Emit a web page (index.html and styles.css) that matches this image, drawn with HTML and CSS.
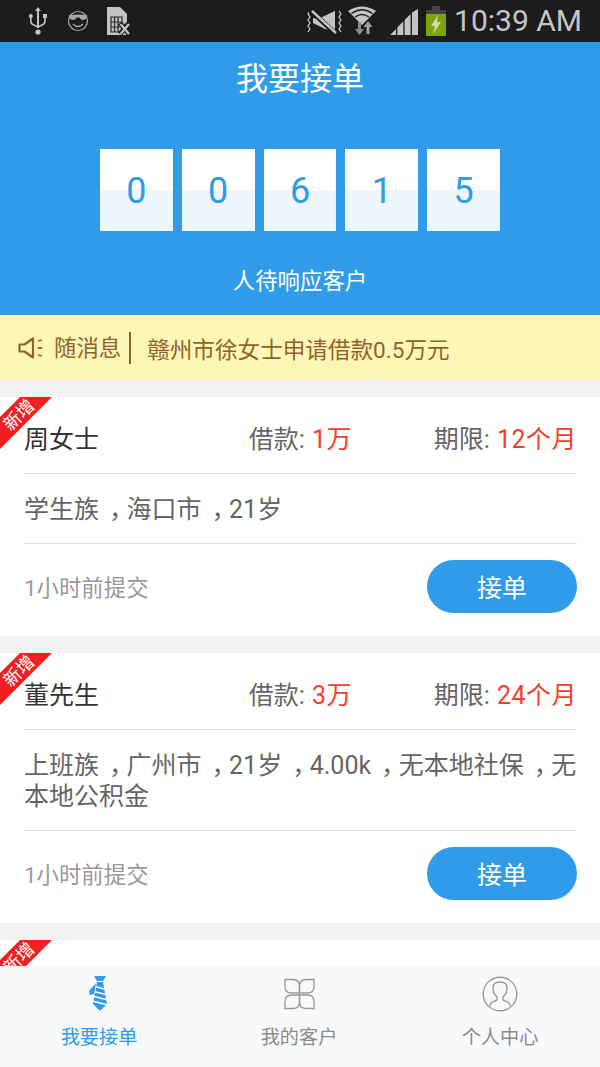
FILE: index.html
```html
<!DOCTYPE html>
<html lang="zh">
<head>
<meta charset="utf-8">
<title>我要接单</title>
<link rel="stylesheet" href="styles.css">
</head>
<body>
<div class="page">
  <div class="status">
    <div class="status-left">
      <svg width="20" height="30" viewBox="0 0 20 30"><g fill="#c4c4c4"><path d="M10 1l3 4h-2v17h-2V5H7z"/><circle cx="10" cy="26" r="2.6"/><circle cx="2.8" cy="10" r="2"/><rect x="15" y="8" width="4" height="4"/></g><path d="M2.8 11v4q0 3 3 4l4.2 2M17 12v3q0 3-3 4l-4 2" fill="none" stroke="#c4c4c4" stroke-width="1.6"/></svg>
      <svg class="ic-face" width="22" height="22" viewBox="0 0 22 22"><circle cx="11" cy="11" r="9.5" fill="none" stroke="#a8a8a8" stroke-width="1.2"/><path d="M1.500 5.500q9.500-2 19 0l-1 3q-3 2.500-6 .5l-1-1.500h-3l-1 1.500q-3 2-6-.5z" fill="#a8a8a8"/><path d="M6 14q5 5 10 0" fill="none" stroke="#a8a8a8" stroke-width="1.2"/></svg>
      <svg class="ic-sim" width="25" height="30" viewBox="0 0 25 30"><path d="M1 1h13l7 7v21H1z" fill="#c4c4c4"/><path d="M5 11h11v15H5zM8.500 11v15M12 11v15M5 16h11M5 21h11" fill="none" stroke="#2a2a2a" stroke-width="1.200"/><path d="M14 17l9 11M23 17l-9 11" stroke="#1c1c1c" stroke-width="5"/><path d="M14.500 18l8.500 10M23 18l-8.500 10" stroke="#c4c4c4" stroke-width="2.200"/></svg>
    </div>
    <div class="status-right">
      <svg class="ic-mute" width="35" height="24" viewBox="0 0 35 24"><g fill="none" stroke="#c4c4c4" stroke-width="1.300"><path d="M3 1L1 4l2 3-2 3 2 3-2 3 2 3-2 3M32 1l2 3-2 3 2 3-2 3 2 3-2 3 2 3"/></g><path d="M6 8l5 1 17-8v20l-10-2-12-6z" fill="#c4c4c4"/><path d="M3 0l26 24" stroke="#1c1c1c" stroke-width="5"/><path d="M5 1l24 22" stroke="#c4c4c4" stroke-width="2.400"/></svg>
      <svg class="ic-wifi" width="30" height="30" viewBox="0 0 30 30"><path d="M0 5Q14-4 28 5L14 19z" fill="#c4c4c4"/><path d="M3.500 7.500Q14 0 24.500 7.500" fill="none" stroke="#1c1c1c" stroke-width="1.300"/><path d="M7 11q7-5 14 0" fill="none" stroke="#1c1c1c" stroke-width="1.300"/><path d="M10 16h3v7h3l-4.500 6L7 23h3z" fill="#8a8a8a"/><path d="M20 15l4.500 6h-3v7h-3v-7h-3z" fill="#a0a0a0"/></svg>
      <svg class="ic-signal" width="28" height="26" viewBox="0 0 28 26"><path d="M0 26l6-6v6zM7.300 26v-7.500l6-6V26zM14.600 26V11l6-6v21zM22 26V3.500L28 0v26z" fill="#c4c4c4"/></svg>
      <svg class="ic-batt" width="20" height="30" viewBox="0 0 20 30"><path d="M6 0h8v4H6z" fill="#444"/><path d="M0 4h20v4H0z" fill="#444"/><path d="M0 8h20v22H0z" fill="#7aa60c"/><path d="M12 9L5 20h4l-2 8 8-12h-4z" fill="#d3e0a0"/></svg>
      <span class="clock">10:39 AM</span>
    </div>
  </div>

  <header class="hero">
    <h1 class="hero-title">我要接单</h1>
    <div class="tiles">
      <div class="tile">0</div>
      <div class="tile">0</div>
      <div class="tile">6</div>
      <div class="tile">1</div>
      <div class="tile">5</div>
    </div>
    <p class="hero-sub">人待响应客户</p>
  </header>

  <div class="notice">
    <svg class="ic-horn" width="26" height="22" viewBox="0 0 26 22"><path d="M1.500 7.500h5L15 1.500v19L6.500 14.500h-5z" fill="none" stroke="#91622f" stroke-width="2.200" stroke-linejoin="round"/><path d="M20 4l4-1M20 11h4M20 18l4 1" stroke="#91622f" stroke-width="1.800"/></svg>
    <span class="notice-label">随消息</span>
    <span class="notice-text">赣州市徐女士申请借款0.5万元</span>
  </div>

  <section class="card">
    <div class="ribbon"><span>新增</span></div>
    <div class="row-head">
      <span class="name">周女士</span>
      <span class="amount">借款: <em>1万</em></span>
      <span class="term">期限: <em>12个月</em></span>
    </div>
    <p class="desc">学生族<span class="comma">，</span>海口市<span class="comma">，</span>21岁</p>
    <div class="row-foot">
      <span class="time">1小时前提交</span>
      <button class="take">接单</button>
    </div>
  </section>

  <section class="card">
    <div class="ribbon"><span>新增</span></div>
    <div class="row-head">
      <span class="name">董先生</span>
      <span class="amount">借款: <em>3万</em></span>
      <span class="term">期限: <em>24个月</em></span>
    </div>
    <p class="desc">上班族<span class="comma">，</span>广州市<span class="comma">，</span>21岁<span class="comma">，</span>4.00k<span class="comma">，</span>无本地社保<span class="comma">，</span>无<wbr>本地公积金</p>
    <div class="row-foot">
      <span class="time">1小时前提交</span>
      <button class="take">接单</button>
    </div>
  </section>

  <section class="card">
    <div class="ribbon"><span>新增</span></div>
    <div class="row-head"></div>
  </section>

  <nav class="tabs">
    <div class="tab tab-on">
      <svg width="20" height="36" viewBox="0 0 20 36"><path d="M5 0h12l-3 5H8z" fill="#2f9be9"/><path d="M8 6h6l4 22-7 7-7-7z" fill="#2f9be9"/><g stroke="#f8f9fb" stroke-width="1.400"><path d="M4 10l15 4M3 15l16 4M3 20l16 4M3 25l16 4"/></g><path d="M7 7L0 15l1 4 4-1z" fill="#2f9be9"/></svg>
      <span>我要接单</span>
    </div>
    <div class="tab">
      <svg width="31" height="36" viewBox="0 0 32 32"><g fill="none" stroke="#9a9a9a" stroke-width="1.400"><path d="M1 1h8q7 0 7 7v7H8Q1 15 1 8z"/><path d="M31 1h-8q-7 0-7 7v7h8q7 0 7-7z"/><path d="M1 31h8q7 0 7-7v-7H8q-7 0-7 7z"/><path d="M31 31h-8q-7 0-7-7v-7h8q7 0 7 7z"/></g></svg>
      <span>我的客户</span>
    </div>
    <div class="tab">
      <svg width="36" height="36" viewBox="0 0 36 36"><g fill="none" stroke="#9a9a9a" stroke-width="1.400"><circle cx="18" cy="18" r="16.800"/><path d="M8 30q0-4 5-5l2-1v-3q-4-3-4-9 0-6 7-6t7 6q0 6-4 9v3l2 1q5 1 5 5"/></g></svg>
      <span>个人中心</span>
    </div>
  </nav>
</div>
</body>
</html>
```

FILE: styles.css
```css
* { box-sizing: border-box; }
html, body { margin: 0; padding: 0; }
body {
  width: 600px;
  height: 1067px;
  overflow: hidden;
  background: #f2f2f2;
  font-family: Roboto, "Noto Sans CJK SC", sans-serif;
}
.page { position: relative; width: 600px; height: 1067px; overflow: hidden; }

.status {
  height: 42px;
  background: #1c1c1c;
  border-bottom: 1px solid #16242e;
  display: flex;
  justify-content: space-between;
  align-items: center;
  padding: 0 18px 0 28px;
}
.status-left, .status-right { display: flex; align-items: center; }
.status svg { flex: none; }
.ic-face { margin-left: 19px; margin-top: 1px; }
.ic-sim { margin-left: 17px; }
.ic-mute { margin-top: 2px; }
.ic-wifi { margin-left: 6px; }
.ic-signal { margin-left: 12px; margin-top: 3px; }
.ic-batt { margin-left: 8px; }
.clock { margin-left: 8px; font-size: 30px; color: #c6c6c6; line-height: 32px; }

.hero {
  height: 273px;
  background: #2f9be9;
  color: #fff;
  text-align: center;
  padding-top: 16px;
}
.hero-title { margin: 0; font-size: 32px; font-weight: 400; line-height: 42px; }
.tiles { display: flex; justify-content: center; gap: 9px; margin-top: 49px; }
.tile {
  width: 72.800px;
  height: 82px;
  background: linear-gradient(#fff 0, #fff 41px, #edf5fd 41px);
  color: #2f9be9;
  font-size: 36px;
  line-height: 85px;
}
.hero-sub { margin: 34px 0 0; font-size: 22.400px; line-height: 32px; }

.notice {
  height: 65px;
  background: #fdf6b5;
  border-top: 1px solid #eef2cf;
  display: flex;
  align-items: center;
  padding-left: 18px;
  color: #91622f;
  font-size: 22.400px;
}
.ic-horn { flex: none; }
.notice-label { margin-left: 10px; padding-right: 8px; border-right: 2px solid #91622f; line-height: 32px; }
.notice-text { margin-left: 16px; font-size: 22.600px; white-space: nowrap; }

.card {
  position: relative;
  margin-top: 17px;
  background: #fff;
  padding: 0 23px 0 24px;
}
.ribbon {
  position: absolute;
  left: 0;
  top: 0;
  width: 52px;
  height: 52px;
  background: #f11f22;
  clip-path: polygon(20px 0, 52px 0, 0 52px, 0 20px);
}
.ribbon span {
  position: absolute;
  left: 0;
  top: 8px;
  width: 38px;
  text-align: center;
  font-size: 17.600px;
  line-height: 20px;
  color: #fff;
  transform: rotate(-45deg);
  white-space: nowrap;
}
.row-head {
  height: 77px;
  border-bottom: 1px solid #dedede;
  display: flex;
  align-items: center;
  font-size: 25px;
  word-spacing: 1px;
  color: #666;
  padding-top: 4px;
}
.name { width: 225px; color: #333; }
.amount { width: 185px; }
.term { white-space: nowrap; }
.row-head em { font-style: normal; color: #f6402c; letter-spacing: 0.5px; }
.desc {
  margin: 0;
  padding: 20px 0 18px;
  border-bottom: 1px solid #dedede;
  font-size: 25px;
  line-height: 31px;
  color: #666;
}
.comma { font-feature-settings: "halt"; margin: 0 5px 0 10px; }
.row-foot {
  height: 92px;
  display: flex;
  justify-content: space-between;
  align-items: center;
  padding-bottom: 8px;
}
.time { font-size: 22.400px; color: #999; }
.take {
  width: 150px;
  height: 53px;
  border: 0;
  border-radius: 27px;
  background: #2f9be9;
  color: #fff;
  font-family: inherit;
  font-size: 25px;
  padding: 0;
}

.tabs {
  position: absolute;
  left: 0;
  right: 0;
  bottom: 0;
  height: 101px;
  background: #f8f9fb;
  display: grid;
  grid-template-columns: 198px 202px 200px;
}
.tab {
  display: flex;
  flex-direction: column;
  align-items: center;
  color: #8c8c8c;
  font-size: 19.200px;
  padding-top: 10px;
}
.tab svg { height: 36px; display: block; }
.tab span { margin-top: 12px; line-height: 28px; }
.tab-on { color: #2f9be9; }
```
